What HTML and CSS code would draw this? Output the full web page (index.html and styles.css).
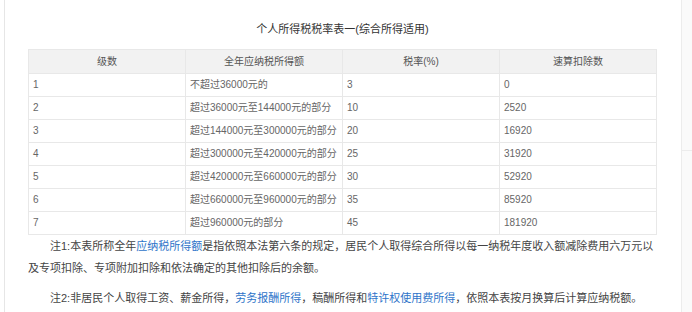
FILE: index.html
```html
<!DOCTYPE html>
<html lang="zh-CN">
<head>
<meta charset="utf-8">
<title>个人所得税税率表</title>
<link rel="stylesheet" href="styles.css">
</head>
<body>
<div class="page">
  <div class="main">
    <h2 class="title">个人所得税税率表一(综合所得适用)</h2>
    <table class="rates">
      <thead>
        <tr><th>级数</th><th>全年应纳税所得额</th><th>税率(%)</th><th>速算扣除数</th></tr>
      </thead>
      <tbody>
        <tr><td>1</td><td>不超过36000元的</td><td>3</td><td>0</td></tr>
        <tr><td>2</td><td>超过36000元至144000元的部分</td><td>10</td><td>2520</td></tr>
        <tr><td>3</td><td>超过144000元至300000元的部分</td><td>20</td><td>16920</td></tr>
        <tr><td>4</td><td>超过300000元至420000元的部分</td><td>25</td><td>31920</td></tr>
        <tr><td>5</td><td>超过420000元至660000元的部分</td><td>30</td><td>52920</td></tr>
        <tr><td>6</td><td>超过660000元至960000元的部分</td><td>35</td><td>85920</td></tr>
        <tr><td>7</td><td>超过960000元的部分</td><td>45</td><td>181920</td></tr>
      </tbody>
    </table>
    <p class="note">注1:本表所称全年<a class="link" href="#">应纳税所得额</a>是指依照本法第六条的规定，居民个人取得综合所得以每一纳税年度收入额减除费用六万元以及专项扣除、专项附加扣除和依法确定的其他扣除后的余额。</p>
    <p class="note">注2:非居民个人取得工资、薪金所得，<a class="link" href="#">劳务报酬所得</a>，稿酬所得和<a class="link" href="#">特许权使用费所得</a>，依照本表按月换算后计算应纳税额。</p>
  </div>
  <div class="side">
    <div class="side-top"></div>
  </div>
</div>
</body>
</html>
```
FILE: styles.css
```css
html, body {
  margin: 0;
  padding: 0;
  background: #fff;
}
body {
  font-family: "Liberation Sans", "Noto Sans CJK SC", sans-serif;
  color: #333;
}
.page {
  display: flex;
  height: 312px;
  overflow: hidden;
}
.main {
  flex: 1;
  min-width: 0;
  margin-left: 4px;
  border-left: 1px solid #e6e6e6;
  padding: 22px 24px 0 23px;
}
.title {
  margin: 0 0 13px;
  text-align: center;
  font-size: 11px;
  font-weight: normal;
  color: #333;
  line-height: 14px;
}
.rates {
  width: 100%;
  border-collapse: collapse;
  table-layout: fixed;
  font-size: 10px;
  color: #666;
}
.rates th, .rates td {
  border: 1px solid #e8e8e8;
  text-align: left;
  padding: 0 4px;
  height: 22px;
  line-height: 12px;
  font-weight: normal;
}
.rates th {
  background: #f2f2f2;
  text-align: center;
  color: #555;
  height: 23px;
}
.note {
  margin: 0;
  font-size: 11px;
  line-height: 22px;
  text-indent: 22px;
  color: #444;
}
.note + .note {
  margin-top: 8px;
}
.link {
  color: #2e74c9;
  text-decoration: none;
}
.side {
  width: 10px;
  flex: none;
  background: #fafafa;
  border-left: 1px solid #ececec;
}
.side-top {
  height: 150px;
  border-bottom: 1px solid #ececec;
}
```
